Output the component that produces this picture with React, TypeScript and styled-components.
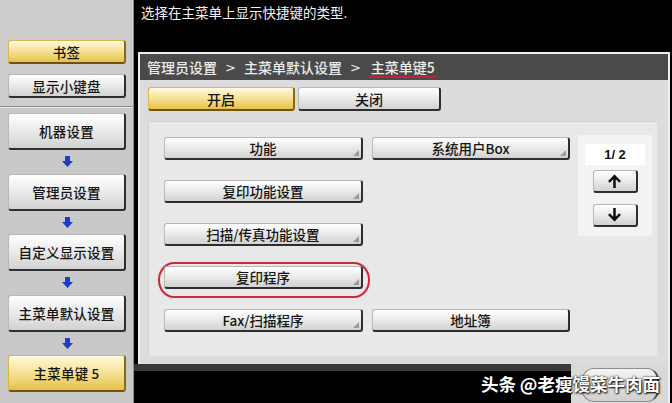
import React from "react";
import styled, { createGlobalStyle, css } from "styled-components";

const FONT = `"Noto Sans CJK SC", "Liberation Sans", sans-serif`;

const GlobalStyle = createGlobalStyle`
  html, body {
    margin: 0;
    padding: 0;
    background: #000;
  }
  body {
    font-family: ${FONT};
  }
`;

type Tone = "gold" | "silver";

const keyFace = css<{ $tone?: Tone }>`
  box-sizing: border-box;
  display: flex;
  align-items: center;
  justify-content: center;
  position: relative;
  color: #141414;
  font-family: ${FONT};
  font-weight: 500;
  border-radius: 3px;
  border-top: 1px solid #b8b8b8;
  border-left: 1px solid #b8b8b8;
  border-right: 2px solid #2e2e2e;
  border-bottom: 2px solid #2e2e2e;
  background: linear-gradient(#ffffff 0%, #eeeeee 40%, #d2d2d2 100%);
  ${(p) =>
    p.$tone === "gold" &&
    css`
      border-top-color: #d9b64a;
      border-left-color: #d9b64a;
      border-right-color: #8a6a12;
      border-bottom-color: #6e5410;
      background: linear-gradient(#fff9dc 0%, #f6e49a 45%, #e6c24a 100%);
    `}
`;

const Screen = styled.div`
  position: relative;
  width: 672px;
  height: 403px;
  overflow: hidden;
  display: flex;
  background: #000;
`;

/* ---------- sidebar ---------- */

const Sidebar = styled.aside`
  width: 133px;
  flex: none;
  background: #c9c9c9;
  border-right: 1px solid #8c8c8c;
  display: flex;
  flex-direction: column;
`;

const SideTop = styled.div`
  box-sizing: border-box;
  height: 107px;
  padding: 40px 0 0 8px;
  display: flex;
  flex-direction: column;
  gap: 10px;
  background: #cdcdcd;
  border-bottom: 1px solid #8a8a8a;
  box-shadow: 0 1px 0 #ededed;
`;

const SideFlow = styled.div`
  padding: 6px 0 0 8px;
  display: flex;
  flex-direction: column;
`;

const SideKey = styled.div<{ $tone?: Tone; $tall?: boolean }>`
  ${keyFace};
  width: 118px;
  height: ${(p) => (p.$tall ? 37 : 24)}px;
  font-size: 13.5px;
  letter-spacing: 0.2px;
`;

const ArrowSlot = styled.div`
  width: 118px;
  height: 23.5px;
  display: flex;
  align-items: center;
  justify-content: center;
`;

const FlowArrow = () => (
  <ArrowSlot>
    <svg width="11" height="11" viewBox="0 0 11 11">
      <path d="M3 0 H8 V5 H11 L5.5 11 L0 5 H3 Z" fill="#1b3dcc" />
    </svg>
  </ArrowSlot>
);

/* ---------- main area ---------- */

const Main = styled.main`
  flex: 1;
  min-width: 0;
  display: flex;
  flex-direction: column;
`;

const Prompt = styled.div`
  box-sizing: border-box;
  height: 52px;
  padding: 3px 0 0 7px;
  color: #f4f4f4;
  font-size: 13.5px;
  line-height: 18px;
`;

const Panel = styled.section`
  box-sizing: border-box;
  margin-left: 4px;
  width: 532px;
  height: 312px;
  border: 2px solid #f0f0f0;
  border-bottom: none;
  background: #dcdcdc;
  display: flex;
  flex-direction: column;
`;

const Crumbs = styled.div`
  height: 26px;
  flex: none;
  padding-left: 7px;
  display: flex;
  align-items: center;
  background: #4a4a4a;
  color: #ececec;
  font-size: 14px;
  font-weight: 500;
`;

const CrumbSep = styled.span`
  margin: 0 8px;
  font-family: "DejaVu Sans", sans-serif;
  font-size: 13px;
`;

const CrumbCurrent = styled.span`
  display: inline-block;
  line-height: 18px;
  padding: 0 2px;
  margin-top: 2px;
  border-bottom: 2px solid #c3203a;
`;

const PanelBody = styled.div`
  flex: 1;
  padding: 7px 11px 8px 8px;
  display: flex;
  flex-direction: column;
`;

const Tabs = styled.div`
  display: flex;
  gap: 3px;
`;

const Tab = styled.div<{ $tone?: Tone; $w: number }>`
  ${keyFace};
  width: ${(p) => p.$w}px;
  height: 24px;
  font-size: 14px;
`;

const Inner = styled.div`
  margin-top: 10px;
  flex: 1;
  box-sizing: border-box;
  padding: 13px 5px 0 15px;
  display: flex;
  gap: 8px;
  background: #e8e8e8;
  border-top: 1px solid #d2d2d2;
  border-left: 1px solid #d2d2d2;
  border-radius: 2px;
`;

const KeyGrid = styled.div`
  margin-top: 2px;
  display: grid;
  grid-template-columns: 199px 198px;
  grid-auto-rows: 23px;
  column-gap: 9px;
  row-gap: 20px;
  align-content: start;
`;

const Key = styled.div<{ $grip?: boolean }>`
  ${keyFace};
  font-size: 13.5px;
  ${(p) =>
    p.$grip &&
    css`
      &::after {
        content: "";
        position: absolute;
        right: 2px;
        bottom: 2px;
        border-style: solid;
        border-width: 0 0 6px 6px;
        border-color: transparent transparent #9a9a9a transparent;
      }
    `}
`;

const Circled = styled.div`
  position: relative;
  display: flex;
  &::before {
    content: "";
    position: absolute;
    left: -6px;
    right: -7px;
    top: -4px;
    bottom: -9px;
    border: 2px solid #c92a3c;
    box-shadow: 0 0 1px #e88;
    border-radius: 16px / 18px;
    pointer-events: none;
  }
  & > div {
    flex: 1;
  }
`;

const Pager = styled.div`
  width: 75px;
  height: 101px;
  box-sizing: border-box;
  padding-top: 9px;
  background: #f3f3f3;
  display: flex;
  flex-direction: column;
  align-items: center;
`;

const PageNo = styled.div`
  width: 60px;
  height: 21px;
  background: #fff;
  display: flex;
  align-items: center;
  justify-content: center;
  font-family: "Liberation Sans", sans-serif;
  font-weight: 700;
  font-size: 13px;
  color: #111;
  white-space: pre;
`;

const PageKey = styled.div<{ $gap: number }>`
  ${keyFace};
  margin-top: ${(p) => p.$gap}px;
  width: 45px;
  height: 23px;
`;

const Arrow = ({ down }: { down?: boolean }) => (
  <svg
    width="13"
    height="14"
    viewBox="0 0 13 14"
    style={down ? { transform: "rotate(180deg)" } : undefined}
  >
    <path
      d="M6.5 13 V2.5 M1.8 7 L6.5 2.2 L11.2 7"
      fill="none"
      stroke="#0d0d0d"
      strokeWidth="2.5"
      strokeLinecap="square"
    />
  </svg>
);

const Footer = styled.div`
  flex: 1;
  display: flex;
`;

const FooterBand = styled.div`
  flex: 1;
  border-top: 7px solid #393939;
  background: #000;
`;

const FooterDock = styled.div`
  width: 99px;
  margin-right: 2px;
  box-sizing: border-box;
  padding: 4px 0 0 11px;
  background: #d9d9d9;
  border-right: 2px solid #f0f0f0;
`;

const DockKey = styled.div`
  width: 77px;
  height: 34px;
  box-sizing: border-box;
  border-radius: 12px;
  border: 1px solid #8e8e8e;
  border-right: 2px solid #4a4a4a;
  background: linear-gradient(#f4f4f4, #cfcfcf);
`;

const Watermark = styled.div`
  position: absolute;
  right: 12px;
  bottom: 8px;
  color: #fff;
  font-family: ${FONT};
  font-weight: 700;
  font-size: 17.5px;
  line-height: 22px;
  text-shadow: 0 0 2px #000, 1px 1px 2px #000;
  white-space: pre;
`;

const App = () => (
  <Screen>
    <GlobalStyle />
    <Sidebar>
      <SideTop>
        <SideKey $tone="gold">书签</SideKey>
        <SideKey>显示小键盘</SideKey>
      </SideTop>
      <SideFlow>
        <SideKey $tall>机器设置</SideKey>
        <FlowArrow />
        <SideKey $tall>管理员设置</SideKey>
        <FlowArrow />
        <SideKey $tall>自定义显示设置</SideKey>
        <FlowArrow />
        <SideKey $tall>主菜单默认设置</SideKey>
        <FlowArrow />
        <SideKey $tall $tone="gold">
          主菜单键&nbsp;5
        </SideKey>
      </SideFlow>
    </Sidebar>

    <Main>
      <Prompt>选择在主菜单上显示快捷键的类型.</Prompt>
      <Panel>
        <Crumbs>
          管理员设置
          <CrumbSep>&gt;</CrumbSep>
          主菜单默认设置
          <CrumbSep>&gt;</CrumbSep>
          <CrumbCurrent>主菜单键5</CrumbCurrent>
        </Crumbs>
        <PanelBody>
          <Tabs>
            <Tab $tone="gold" $w={147}>
              开启
            </Tab>
            <Tab $w={143}>关闭</Tab>
          </Tabs>
          <Inner>
            <KeyGrid>
              <Key $grip>功能</Key>
              <Key $grip>系统用户Box</Key>
              <Key $grip>复印功能设置</Key>
              <span />
              <Key $grip>扫描/传真功能设置</Key>
              <span />
              <Circled>
                <Key $grip>复印程序</Key>
              </Circled>
              <span />
              <Key $grip>Fax/扫描程序</Key>
              <Key>地址簿</Key>
            </KeyGrid>
            <Pager>
              <PageNo>{"1/ 2"}</PageNo>
              <PageKey $gap={5}>
                <Arrow />
              </PageKey>
              <PageKey $gap={11}>
                <Arrow down />
              </PageKey>
            </Pager>
          </Inner>
        </PanelBody>
      </Panel>
      <Footer>
        <FooterBand />
        <FooterDock>
          <DockKey />
        </FooterDock>
      </Footer>
    </Main>

    <Watermark>{"头条 @老瘦馒菜牛肉面"}</Watermark>
  </Screen>
);

export default App;
